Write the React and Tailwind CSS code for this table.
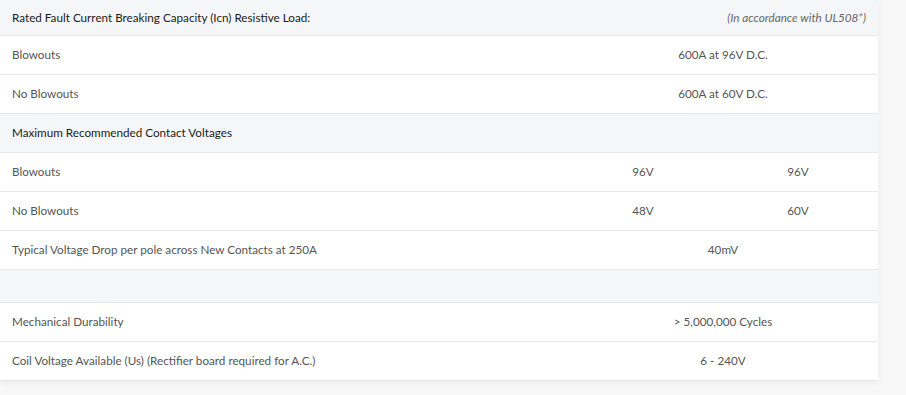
import React from 'react';

const rows = [
  { type: 'head', label: 'Rated Fault Current Breaking Capacity (Icn) Resistive Load:', note: '(In accordance with UL508*)', h: 'h-[36px]' },
  { type: 'row', label: 'Blowouts', span: '600A at 96V D.C.' },
  { type: 'row', label: 'No Blowouts', span: '600A at 60V D.C.' },
  { type: 'head', label: 'Maximum Recommended Contact Voltages', h: 'h-[39px]' },
  { type: 'row', label: 'Blowouts', a: '96V', b: '96V' },
  { type: 'row', label: 'No Blowouts', a: '48V', b: '60V' },
  { type: 'row', label: 'Typical Voltage Drop per pole across New Contacts at 250A', span: '40mV' },
  { type: 'head', label: '', h: 'h-[33px]' },
  { type: 'row', label: 'Mechanical Durability', span: '> 5,000,000 Cycles' },
  { type: 'row', label: 'Coil Voltage Available (Us) (Rectifier board required for A.C.)', span: '6 - 240V' },
];

function Row({ r }) {
  if (r.type === 'head') {
    return (
      <div className={`flex items-center justify-between ${r.h} bg-[#f5f6f7] border-b border-[#e6e8ea] px-3 text-[#1a1a1a]`}>
        <span>{r.label}</span>
        {r.note && <span className="italic text-[#666]">{r.note}</span>}
      </div>
    );
  }
  return (
    <div className="flex items-center h-[39px] bg-white border-b border-[#e6e8ea] text-[#555]">
      <div className="w-[568px] pl-3">{r.label}</div>
      {r.span ? (
        <div className="w-[310px] text-center">{r.span}</div>
      ) : (
        <>
          <div className="w-[150px] text-center">{r.a}</div>
          <div className="w-[160px] text-center">{r.b}</div>
        </>
      )}
    </div>
  );
}

export default function App() {
  return (
    <div className="w-[906px] h-[395px] bg-[#f8f8f8] overflow-hidden font-['Lato',sans-serif] text-[11.7px]">
      <div className="w-[878px] bg-white shadow-[0_2px_6px_rgba(0,0,0,0.06)]">
        {rows.map((r, i) => (
          <Row key={i} r={r} />
        ))}
      </div>
    </div>
  );
}
